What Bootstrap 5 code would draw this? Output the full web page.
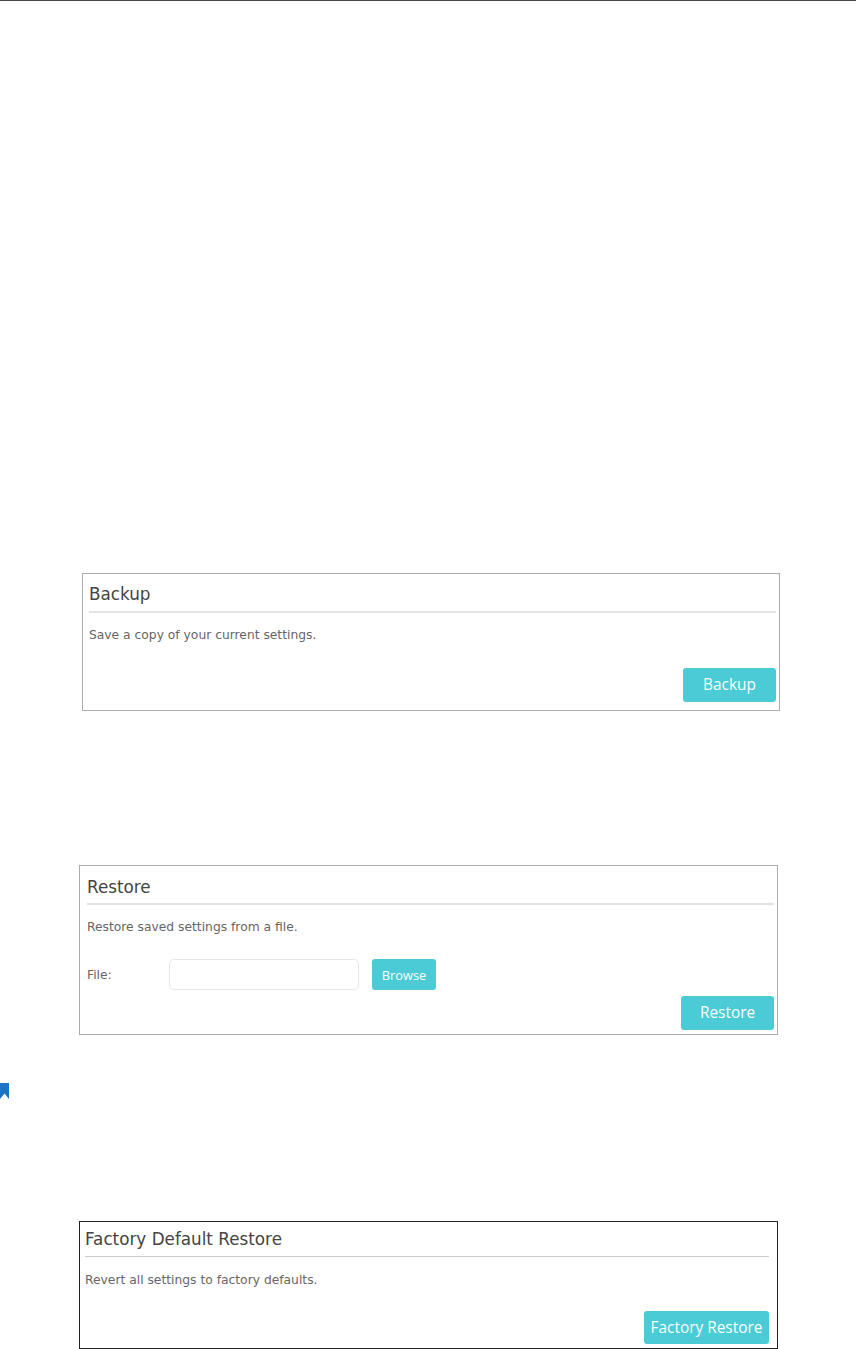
<!DOCTYPE html>
<html lang="en">
<head>
<meta charset="utf-8">
<title>Backup and Restore</title>
<link href="https://cdn.jsdelivr.net/npm/bootstrap@5.3.0/dist/css/bootstrap.min.css" rel="stylesheet">
<style>
html,body{height:1349px;overflow:hidden;background:#fff}
body{font-family:"DejaVu Sans","Liberation Sans",sans-serif;color:#666}
.top-rule{height:1px;background:#444}
.shot{background:#fff;border:1px solid #ababab;border-radius:0}
.shot-backup{margin:572px 0 0 82px;width:698px;height:138px;padding:0 3px 0 6px}
.shot-restore{margin:154px 0 0 79px;width:699px;height:170px;padding:0 3px 0 7px}
.shot-factory{margin:124px 0 0 79px;width:699px;height:128px;padding:0 8px 0 5px;border-color:#222}
.shot-title{font-size:16.8px;line-height:20px;color:#444;margin:0;padding-top:10px;padding-bottom:7px;border-bottom:2px solid #e3e3e3;font-weight:400}
.shot-restore .shot-title{padding-top:11px;padding-bottom:6px}
.shot-factory .shot-title{padding-top:7px;padding-bottom:7px;border-bottom:1px solid #ccc}
.shot-text{font-size:12.3px;line-height:16px;margin:0;color:#666}
.shot-backup .shot-text{margin-top:14px}
.shot-restore .shot-text{margin-top:14px}
.shot-factory .shot-text{margin-top:15px}
.btn-shot{background:#4acbd6;border:0;border-radius:3px;color:#fff;font-family:"Open Sans","Noto Sans",sans-serif;font-size:15.4px;line-height:20px;padding:0;display:flex;align-items:center;justify-content:center}
.btn-shot:hover{background:#4acbd6;color:#fff}
.btn-main{width:93px;height:34px}
.btn-browse{width:64px;height:31px;font-size:12.8px;margin-left:13px}
.btn-fac{width:125px;height:33px}
.backup-foot{margin-top:25px}
.restore-foot{margin-top:6px}
.fac-foot{margin-top:23px}
.file-row{margin-top:24px;height:31px}
.file-label{width:82px;font-size:12.3px;color:#666;margin-top:2px}
.file-box{width:190px;height:31px;border:1px solid #e6e6e6;border-radius:5px;background:#fff;padding:0}
.mark-row{height:15px;margin-top:48px;margin-bottom:-1px}
.mark-icon{display:block;width:9px;height:16px}
</style>
</head>
<body class="m-0">
<div class="top-rule"></div>

<section class="shot shot-backup">
  <h2 class="shot-title">Backup</h2>
  <p class="shot-text">Save a copy of your current settings.</p>
  <div class="d-flex justify-content-end backup-foot">
    <button type="button" class="btn btn-shot btn-main">Backup</button>
  </div>
</section>

<section class="shot shot-restore">
  <h2 class="shot-title">Restore</h2>
  <p class="shot-text">Restore saved settings from a file.</p>
  <div class="d-flex align-items-center file-row">
    <label class="file-label" for="restore-file">File:</label>
    <input id="restore-file" class="file-box" type="text">
    <button type="button" class="btn btn-shot btn-browse">Browse</button>
  </div>
  <div class="d-flex justify-content-end restore-foot">
    <button type="button" class="btn btn-shot btn-main">Restore</button>
  </div>
</section>

<div class="mark-row">
  <svg class="mark-icon" viewBox="0 0 9 16" aria-hidden="true"><path d="M0 0H9V16L4.500 10.500L0 16Z" fill="#1b75c4"/></svg>
</div>

<section class="shot shot-factory">
  <h2 class="shot-title">Factory Default Restore</h2>
  <p class="shot-text">Revert all settings to factory defaults.</p>
  <div class="d-flex justify-content-end fac-foot">
    <button type="button" class="btn btn-shot btn-fac">Factory Restore</button>
  </div>
</section>
</body>
</html>
